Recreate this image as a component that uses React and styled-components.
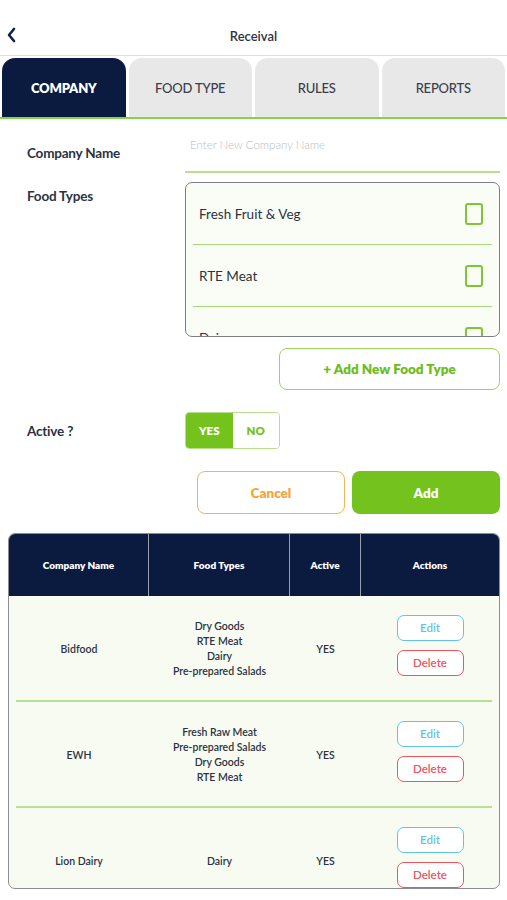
import React from "react";
import styled, { createGlobalStyle } from "styled-components";

const GlobalStyle = createGlobalStyle`
  body {
    margin: 0;
    background: #fff;
    font-family: Lato, "Open Sans", sans-serif;
    color: #2b3243;
  }
`;

const foodTypes = ["Fresh Fruit & Veg", "RTE Meat", "Dairy"];

const companies = [
  { name: "Bidfood", types: ["Dry Goods", "RTE Meat", "Dairy", "Pre-prepared Salads"] },
  { name: "EWH", types: ["Fresh Raw Meat", "Pre-prepared Salads", "Dry Goods", "RTE Meat"] },
  { name: "Lion Dairy", types: ["Dairy"] },
];

export default function App() {
  return (
    <Page>
      <GlobalStyle />
      <Header>
        <Back>
          <svg width="10" height="16" viewBox="0 0 10 16">
            <path d="M8 2 L3 8 L8 14" fill="none" stroke="#0e2148" strokeWidth="2.6" strokeLinecap="round" strokeLinejoin="round" />
          </svg>
        </Back>
        <Title>Receival</Title>
      </Header>

      <Tabs>
        <Tab $active>COMPANY</Tab>
        <Tab>FOOD TYPE</Tab>
        <Tab>RULES</Tab>
        <Tab>REPORTS</Tab>
      </Tabs>

      <Form>
        <FieldRow>
          <Label $pad="6px">Company Name</Label>
          <Input placeholder="Enter New Company Name" />
        </FieldRow>

        <FieldRow $top>
          <Label $pad="6px">Food Types</Label>
          <div>
            <TypeBox>
              {foodTypes.map((t) => (
                <TypeRow key={t}>
                  <span>{t}</span>
                  <Check />
                </TypeRow>
              ))}
            </TypeBox>
            <AddTypeWrap>
              <OutlineButton>+ Add New Food Type</OutlineButton>
            </AddTypeWrap>
          </div>
        </FieldRow>

        <FieldRow $active>
          <Label>Active ?</Label>
          <Toggle>
            <ToggleOpt $on>YES</ToggleOpt>
            <ToggleOpt>NO</ToggleOpt>
          </Toggle>
        </FieldRow>

        <Actions>
          <CancelButton>Cancel</CancelButton>
          <AddButton>Add</AddButton>
        </Actions>
      </Form>

      <TableWrap>
        <HeadRow>
          <HeadCell>Company Name</HeadCell>
          <HeadCell>Food Types</HeadCell>
          <HeadCell>Active</HeadCell>
          <HeadCell $last>Actions</HeadCell>
        </HeadRow>
        {companies.map((c, i) => (
          <BodyRow key={c.name} $divider={i < companies.length - 1}>
            <Cell>{c.name}</Cell>
            <Cell>
              {c.types.map((t) => (
                <div key={t}>{t}</div>
              ))}
            </Cell>
            <Cell>YES</Cell>
            <Cell>
              <SmallButtons>
                <SmallButton $color="#62c3e6">Edit</SmallButton>
                <SmallButton $color="#f0545f">Delete</SmallButton>
              </SmallButtons>
            </Cell>
          </BodyRow>
        ))}
      </TableWrap>
    </Page>
  );
}

const Page = styled.div`
  width: 507px;
  min-height: 900px;
  background: #fff;
`;

const Header = styled.div`
  height: 56px;
  box-sizing: border-box;
  display: flex;
  align-items: flex-end;
  justify-content: center;
  padding-bottom: 11px;
  position: relative;
  border-bottom: 1px solid #dedede;
`;

const Back = styled.div`
  position: absolute;
  left: 6px;
  top: 27px;
`;

const Title = styled.div`
  font-size: 13px;
  font-weight: 600;
  color: #2b3243;
`;

const Tabs = styled.div`
  display: grid;
  grid-template-columns: repeat(4, 1fr);
  gap: 3px;
  padding: 2px 2px 0;
  border-bottom: 2px solid #86d34a;
`;

const Tab = styled.div`
  height: 59px;
  display: flex;
  align-items: center;
  justify-content: center;
  border-radius: 13px 13px 0 0;
  background: ${(p) => (p.$active ? "#0b1b3f" : "#e8e8e8")};
  color: ${(p) => (p.$active ? "#fff" : "#3a3f4a")};
  font-size: 13px;
  font-weight: ${(p) => (p.$active ? 800 : 500)};
  letter-spacing: -0.2px;
`;

const Form = styled.div`
  padding: 7px 7px 0 27px;
`;

const FieldRow = styled.div`
  display: grid;
  grid-template-columns: 158px 1fr;
  align-items: ${(p) => (p.$top ? "start" : "center")};
  margin-top: ${(p) => (p.$top ? "9px" : p.$active ? "22px" : "0")};
`;

const Label = styled.div`
  font-size: 13.5px;
  font-weight: 700;
  color: #2b3243;
  letter-spacing: -0.2px;
  padding-top: ${(p) => p.$pad || "0"};
`;

const Input = styled.input`
  border: none;
  border-bottom: 2px solid #b6e08d;
  height: 37px;
  padding: 0 0 8px 5px;
  font-family: Lato, sans-serif;
  font-size: 11.5px;
  background: transparent;
  outline: none;
  &::placeholder {
    color: #b9bcc2;
    font-weight: 300;
  }
`;

const TypeBox = styled.div`
  height: 153px;
  overflow: hidden;
  border: 1px solid #7c7f86;
  border-radius: 7px;
  background: #fafdf6;
  padding: 0 7px;
`;

const TypeRow = styled.div`
  height: 62px;
  display: flex;
  align-items: center;
  justify-content: space-between;
  padding: 0 9px 0 6px;
  border-bottom: 1.5px solid #a7da79;
  font-size: 13.5px;
  color: #2b3243;
  box-sizing: border-box;
`;

const Check = styled.div`
  width: 14px;
  height: 18px;
  border: 2px solid #7dc734;
  border-radius: 3px;
`;

const AddTypeWrap = styled.div`
  display: flex;
  justify-content: flex-end;
  margin-top: 11px;
`;

const OutlineButton = styled.div`
  width: 221px;
  height: 42px;
  box-sizing: border-box;
  border: 1.5px solid #9ad35f;
  border-radius: 8px;
  display: flex;
  align-items: center;
  justify-content: center;
  color: #6cbd1c;
  font-size: 13.5px;
  font-weight: 800;
`;

const Toggle = styled.div`
  display: flex;
  width: 95px;
  height: 37px;
  box-sizing: border-box;
  border: 1.5px solid #b6e08d;
  border-radius: 4px;
  overflow: hidden;
`;

const ToggleOpt = styled.div`
  flex: 1;
  display: flex;
  align-items: center;
  justify-content: center;
  font-size: 11.5px;
  font-weight: 800;
  background: ${(p) => (p.$on ? "#74c21d" : "#fff")};
  color: ${(p) => (p.$on ? "#fff" : "#74c21d")};
`;

const Actions = styled.div`
  display: flex;
  justify-content: flex-end;
  gap: 7px;
  margin-top: 22px;
`;

const BaseButton = styled.div`
  width: 148px;
  height: 43px;
  box-sizing: border-box;
  border-radius: 8px;
  display: flex;
  align-items: center;
  justify-content: center;
  font-size: 13.5px;
  font-weight: 800;
`;

const CancelButton = styled(BaseButton)`
  border: 1.5px solid #f8b24f;
  color: #f5a53a;
`;

const AddButton = styled(BaseButton)`
  background: #74c21d;
  color: #fff;
`;

const TableWrap = styled.div`
  margin: 19px 7px 0 8px;
  height: 356px;
  box-sizing: border-box;
  border: 1px solid #8a8d93;
  border-radius: 7px;
  overflow: hidden;
  background: #f7fbf2;
`;

const cols = "140px 141px 71px 1fr";

const HeadRow = styled.div`
  display: grid;
  grid-template-columns: ${cols};
  height: 62px;
  background: #0b1b3f;
`;

const HeadCell = styled.div`
  display: flex;
  align-items: center;
  justify-content: center;
  color: #fff;
  font-size: 10px;
  font-weight: 800;
  border-right: ${(p) => (p.$last ? "none" : "1.5px solid #9aa0ab")};
`;

const BodyRow = styled.div`
  display: grid;
  grid-template-columns: ${cols};
  height: 106px;
  position: relative;
  &::after {
    content: "";
    display: ${(p) => (p.$divider ? "block" : "none")};
    position: absolute;
    left: 7px;
    right: 7px;
    bottom: 0;
    height: 2px;
    background: #b7e08f;
  }
`;

const Cell = styled.div`
  display: flex;
  flex-direction: column;
  align-items: center;
  justify-content: center;
  text-align: center;
  font-size: 10.5px;
  line-height: 15px;
  font-weight: 600;
  color: #2b3243;
`;

const SmallButtons = styled.div`
  display: flex;
  flex-direction: column;
  gap: 9px;
  margin-top: -8px;
`;

const SmallButton = styled.div`
  width: 67px;
  height: 26px;
  box-sizing: border-box;
  border: 1.5px solid ${(p) => p.$color};
  border-radius: 7px;
  background: #fff;
  color: ${(p) => p.$color};
  display: flex;
  align-items: center;
  justify-content: center;
  font-size: 11.5px;
  font-weight: 600;
`;
